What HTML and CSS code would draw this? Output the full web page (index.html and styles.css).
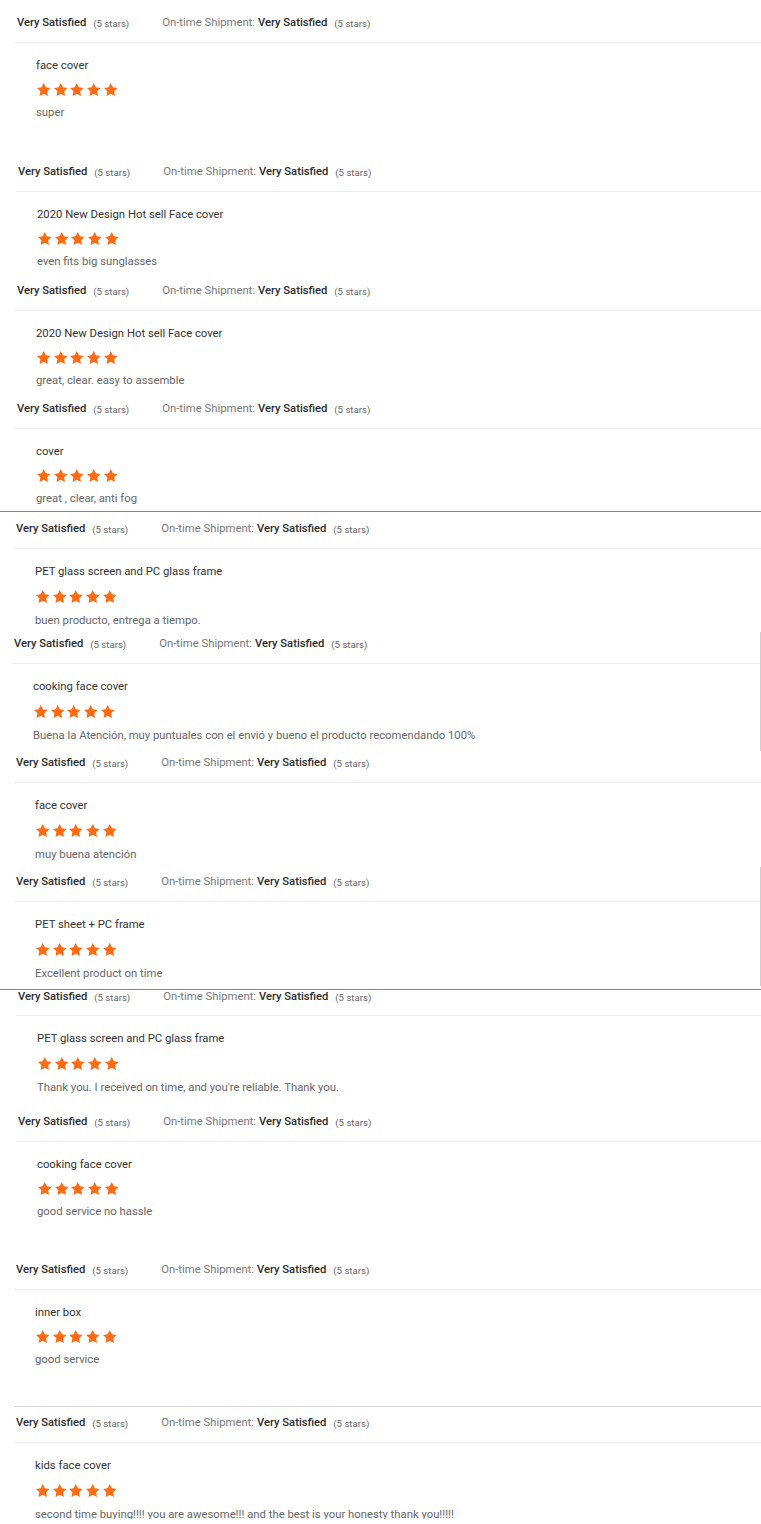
FILE: index.html
```html
<!DOCTYPE html>
<html lang="en">
<head>
<meta charset="utf-8">
<title>Reviews</title>
<link rel="stylesheet" href="styles.css">
</head>
<body>
<svg width="0" height="0" class="defs">
  <defs>
    <symbol id="star" viewBox="0 0 24 24"><path d="M12 1.6l3.2 6.6 7.2 1-5.2 5.1 1.3 7.2L12 18.1l-6.5 3.4 1.3-7.2-5.2-5.1 7.2-1z"/></symbol>
  </defs>
</svg>
<main class="reviews">

  <section class="review off-15 first">
    <div class="review__inner">
      <div class="review__head"><span class="rating">Very Satisfied</span><span class="stars-note">(5 stars)</span><span class="ship">On-time Shipment:</span><span class="rating">Very Satisfied</span><span class="stars-note">(5 stars)</span></div>
      <div class="review__body">
        <div class="review__title">face cover</div>
        <div class="stars"><svg><use href="#star"/></svg><svg><use href="#star"/></svg><svg><use href="#star"/></svg><svg><use href="#star"/></svg><svg><use href="#star"/></svg></div>
        <p class="review__text">super</p>
      </div>
    </div>
  </section>

  <section class="review off-16 gap-30">
    <div class="review__inner">
      <div class="review__head"><span class="rating">Very Satisfied</span><span class="stars-note">(5 stars)</span><span class="ship">On-time Shipment:</span><span class="rating">Very Satisfied</span><span class="stars-note">(5 stars)</span></div>
      <div class="review__body">
        <div class="review__title">2020 New Design Hot sell Face cover</div>
        <div class="stars"><svg><use href="#star"/></svg><svg><use href="#star"/></svg><svg><use href="#star"/></svg><svg><use href="#star"/></svg><svg><use href="#star"/></svg></div>
        <p class="review__text">even fits big sunglasses</p>
      </div>
    </div>
  </section>

  <section class="review off-15">
    <div class="review__inner">
      <div class="review__head"><span class="rating">Very Satisfied</span><span class="stars-note">(5 stars)</span><span class="ship">On-time Shipment:</span><span class="rating">Very Satisfied</span><span class="stars-note">(5 stars)</span></div>
      <div class="review__body">
        <div class="review__title">2020 New Design Hot sell Face cover</div>
        <div class="stars"><svg><use href="#star"/></svg><svg><use href="#star"/></svg><svg><use href="#star"/></svg><svg><use href="#star"/></svg><svg><use href="#star"/></svg></div>
        <p class="review__text">great, clear. easy to assemble</p>
      </div>
    </div>
  </section>

  <section class="review off-15 gap-n1">
    <div class="review__inner">
      <div class="review__head"><span class="rating">Very Satisfied</span><span class="stars-note">(5 stars)</span><span class="ship">On-time Shipment:</span><span class="rating">Very Satisfied</span><span class="stars-note">(5 stars)</span></div>
      <div class="review__body">
        <div class="review__title">cover</div>
        <div class="stars"><svg><use href="#star"/></svg><svg><use href="#star"/></svg><svg><use href="#star"/></svg><svg><use href="#star"/></svg><svg><use href="#star"/></svg></div>
        <p class="review__text">great , clear, anti fog</p>
      </div>
    </div>
  </section>

  <section class="review off-14 cut cut--a">
    <div class="review__inner">
      <div class="review__head"><span class="rating">Very Satisfied</span><span class="stars-note">(5 stars)</span><span class="ship">On-time Shipment:</span><span class="rating">Very Satisfied</span><span class="stars-note">(5 stars)</span></div>
      <div class="review__body loose">
        <div class="review__title">PET glass screen and PC glass frame</div>
        <div class="stars"><svg><use href="#star"/></svg><svg><use href="#star"/></svg><svg><use href="#star"/></svg><svg><use href="#star"/></svg><svg><use href="#star"/></svg></div>
        <p class="review__text">buen producto, entrega a tiempo.</p>
      </div>
    </div>
  </section>

  <section class="review off-12 gap-n4 edge edge--a">
    <div class="review__inner">
      <div class="review__head"><span class="rating">Very Satisfied</span><span class="stars-note">(5 stars)</span><span class="ship">On-time Shipment:</span><span class="rating">Very Satisfied</span><span class="stars-note">(5 stars)</span></div>
      <div class="review__body loose">
        <div class="review__title">cooking face cover</div>
        <div class="stars"><svg><use href="#star"/></svg><svg><use href="#star"/></svg><svg><use href="#star"/></svg><svg><use href="#star"/></svg><svg><use href="#star"/></svg></div>
        <p class="review__text">Buena la Atención, muy puntuales con el envió y bueno el producto recomendando 100%</p>
      </div>
    </div>
  </section>

  <section class="review off-14">
    <div class="review__inner">
      <div class="review__head"><span class="rating">Very Satisfied</span><span class="stars-note">(5 stars)</span><span class="ship">On-time Shipment:</span><span class="rating">Very Satisfied</span><span class="stars-note">(5 stars)</span></div>
      <div class="review__body loose">
        <div class="review__title">face cover</div>
        <div class="stars"><svg><use href="#star"/></svg><svg><use href="#star"/></svg><svg><use href="#star"/></svg><svg><use href="#star"/></svg><svg><use href="#star"/></svg></div>
        <p class="review__text">muy buena atención</p>
      </div>
    </div>
  </section>

  <section class="review off-14 edge edge--b">
    <div class="review__inner">
      <div class="review__head"><span class="rating">Very Satisfied</span><span class="stars-note">(5 stars)</span><span class="ship">On-time Shipment:</span><span class="rating">Very Satisfied</span><span class="stars-note">(5 stars)</span></div>
      <div class="review__body loose">
        <div class="review__title">PET sheet + PC frame</div>
        <div class="stars"><svg><use href="#star"/></svg><svg><use href="#star"/></svg><svg><use href="#star"/></svg><svg><use href="#star"/></svg><svg><use href="#star"/></svg></div>
        <p class="review__text">Excellent product on time</p>
      </div>
    </div>
  </section>

  <section class="review off-16 cut cut--b">
    <div class="review__inner">
      <div class="review__head"><span class="rating">Very Satisfied</span><span class="stars-note">(5 stars)</span><span class="ship">On-time Shipment:</span><span class="rating">Very Satisfied</span><span class="stars-note">(5 stars)</span></div>
      <div class="review__body loose">
        <div class="review__title">PET glass screen and PC glass frame</div>
        <div class="stars"><svg><use href="#star"/></svg><svg><use href="#star"/></svg><svg><use href="#star"/></svg><svg><use href="#star"/></svg><svg><use href="#star"/></svg></div>
        <p class="review__text">Thank you. I received on time, and you're reliable. Thank you.</p>
      </div>
    </div>
  </section>

  <section class="review off-16 gap-7">
    <div class="review__inner">
      <div class="review__head"><span class="rating">Very Satisfied</span><span class="stars-note">(5 stars)</span><span class="ship">On-time Shipment:</span><span class="rating">Very Satisfied</span><span class="stars-note">(5 stars)</span></div>
      <div class="review__body">
        <div class="review__title">cooking face cover</div>
        <div class="stars"><svg><use href="#star"/></svg><svg><use href="#star"/></svg><svg><use href="#star"/></svg><svg><use href="#star"/></svg><svg><use href="#star"/></svg></div>
        <p class="review__text">good service no hassle</p>
      </div>
    </div>
  </section>

  <section class="review off-14 gap-29">
    <div class="review__inner">
      <div class="review__head"><span class="rating">Very Satisfied</span><span class="stars-note">(5 stars)</span><span class="ship">On-time Shipment:</span><span class="rating">Very Satisfied</span><span class="stars-note">(5 stars)</span></div>
      <div class="review__body">
        <div class="review__title">inner box</div>
        <div class="stars"><svg><use href="#star"/></svg><svg><use href="#star"/></svg><svg><use href="#star"/></svg><svg><use href="#star"/></svg><svg><use href="#star"/></svg></div>
        <p class="review__text">good service</p>
      </div>
    </div>
  </section>

  <section class="review off-14 ruled">
    <div class="review__inner">
      <div class="review__head"><span class="rating">Very Satisfied</span><span class="stars-note">(5 stars)</span><span class="ship">On-time Shipment:</span><span class="rating">Very Satisfied</span><span class="stars-note">(5 stars)</span></div>
      <div class="review__body loose">
        <div class="review__title">kids face cover</div>
        <div class="stars"><svg><use href="#star"/></svg><svg><use href="#star"/></svg><svg><use href="#star"/></svg><svg><use href="#star"/></svg><svg><use href="#star"/></svg></div>
        <p class="review__text">second time buying!!!! you are awesome!!! and the best is your honesty thank you!!!!!</p>
      </div>
    </div>
  </section>

</main>
</body>
</html>
```

FILE: styles.css
```css
html, body {
  margin: 0;
  padding: 0;
  background: #ffffff;
}

body {
  font-family: Roboto, "Liberation Sans", Arial, sans-serif;
  font-size: 11.3px;
  color: #333333;
  overflow: hidden;
}

.defs {
  position: absolute;
  width: 0;
  height: 0;
}

.reviews {
  display: flex;
  flex-direction: column;
  width: 761px;
}

.review {
  position: relative;
  box-sizing: border-box;
  width: 100%;
}

.review__inner {
  display: flex;
  flex-direction: column;
}

.review__head {
  display: flex;
  align-items: center;
  height: 20px;
  padding: 13px 0 9px 2px;
  line-height: 20px;
  border-bottom: 1px solid #ececec;
  white-space: nowrap;
  overflow: hidden;
}

.rating {
  font-weight: 500;
  color: #2b2b2b;
  font-size: 11.2px;
}

.stars-note {
  font-size: 9.6px;
  color: #666666;
  margin-left: 7px;
  padding-top: 1px;
}

.ship {
  color: #777777;
  margin-left: 33px;
  margin-right: 3px;
}

.review__body {
  display: flex;
  flex-direction: column;
  padding-left: 21px;
  padding-top: 13px;
}

.review__title {
  height: 20px;
  line-height: 20px;
  color: #333333;
}

.stars {
  display: flex;
  gap: 1.2px;
  margin-top: 6px;
  height: 16px;
  align-items: center;
}

.stars svg {
  width: 15.5px;
  height: 15.5px;
  fill: #ff6a12;
}

.review__text {
  margin: 7px 0 0;
  height: 14px;
  line-height: 16px;
  color: #666666;
}

.loose .stars {
  margin-top: 7px;
}

.loose .review__text {
  margin-top: 8px;
  height: 12px;
}

/* horizontal offsets of the stitched captures */
.off-12 { padding-left: 12px; }
.off-14 { padding-left: 14px; }
.off-15 { padding-left: 15px; }
.off-16 { padding-left: 16px; }

/* vertical spacing between captures */
.gap-30 { margin-top: 30px; }
.gap-29 { margin-top: 29px; }
.gap-7 { margin-top: 7px; }
.gap-n1 { margin-top: -1px; }
.gap-n4 { margin-top: -4px; }

/* stitch seams */
.cut {
  border-top: 1px solid #5b95a4;
}

.cut--a {
  margin-top: 6px;
}

.cut--a .review__head {
  padding-top: 7px;
}

.cut--b {
  margin-top: 11px;
}

.cut--b .review__head {
  height: 12px;
  padding-top: 1px;
  padding-bottom: 12px;
  line-height: 12px;
}

.ruled {
  margin-top: 40px;
}

.ruled .review__inner {
  border-top: 1px solid #d8d8d8;
}

.ruled .review__head {
  padding-top: 6px;
}

.edge::after {
  content: "";
  position: absolute;
  right: 0;
  width: 1px;
  height: 119px;
  background: #cfcfcf;
}

.edge--a::after {
  top: 11px;
}

.edge--b::after {
  top: 8px;
}
```
